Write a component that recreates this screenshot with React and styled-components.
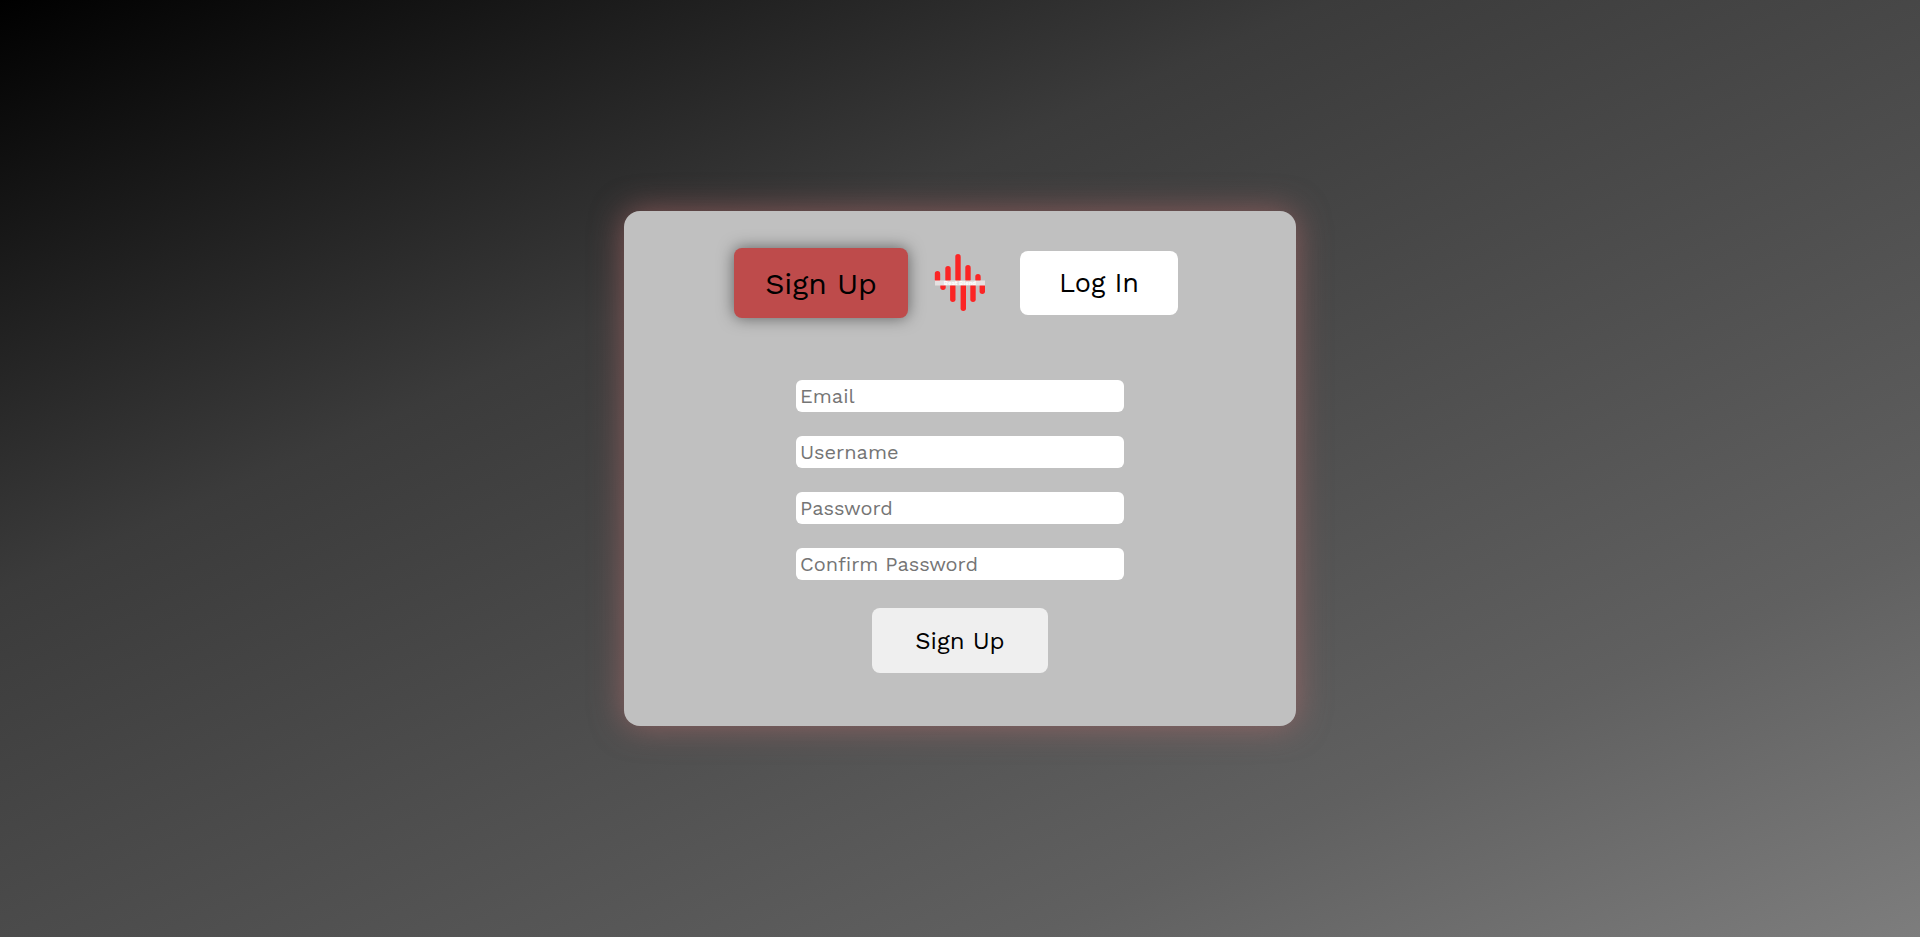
import React from "react";
import styled, { createGlobalStyle } from "styled-components";

const GlobalStyle = createGlobalStyle`
  * { box-sizing: border-box; }
  body { margin: 0; font-family: "Work Sans", Inter, sans-serif; font-weight: 400; color: #000; }
  button, input { font-family: inherit; font-weight: inherit; color: inherit; }
`;

const Page = styled.main`
  min-height: 100vh;
  display: flex;
  align-items: center;
  justify-content: center;
  background: linear-gradient(156deg, #000 0%, #3b3b3b 33%, #606060 78%, #7d7d7d 100%);
`;

const Card = styled.section`
  width: 35%;
  min-width: 560px;
  padding: 32px 0 53px;
  display: flex;
  flex-direction: column;
  align-items: center;
  background: #c0c0c0;
  border-radius: 16px;
  box-shadow: 0 0 32px rgba(188, 110, 110, 0.6);
`;

const Tabs = styled.nav`
  display: flex;
  align-items: center;
`;

const Tab = styled.button`
  width: ${(p) => (p.$active ? "174px" : "158px")};
  height: ${(p) => (p.$active ? "70px" : "64px")};
  margin: ${(p) => (p.$active ? "0 -8px" : "0")};
  padding: 0;
  border: 0;
  border-radius: 8px;
  font-size: ${(p) => (p.$active ? "30px" : "27px")};
  background: ${(p) => (p.$active ? "#be4b4b" : "#fff")};
  box-shadow: ${(p) => (p.$active ? "0 0 16px rgba(0, 0, 0, 0.5)" : "none")};
`;

const Logo = styled.svg`
  width: 80px;
  height: 80px;
  margin: 0 20px;
`;

const Form = styled.form`
  width: 328px;
  margin-top: 57px;
  display: flex;
  flex-direction: column;
  align-items: center;
  gap: 24px;
`;

const Field = styled.input`
  width: 100%;
  height: 32px;
  padding: 0 4px;
  border: 0;
  border-radius: 6px;
  background: #fff;
  font-size: 20px;
  &::placeholder { color: #757575; opacity: 1; }
`;

const Submit = styled.button`
  width: 176px;
  height: 65px;
  margin-top: 4px;
  padding: 0;
  border: 0;
  border-radius: 8px;
  background: #efefef;
  font-size: 24px;
`;

const bars = [
  [17.5, 31, 42], [28, 26, 42], [38, 14, 42], [48, 25, 42], [58, 34, 42],
  [23, 43, 50], [32.8, 43, 62], [43.3, 43, 71], [53, 43, 62], [62.3, 43, 54],
];

const fields = [
  ["Email", "email"],
  ["Username", "text"],
  ["Password", "password"],
  ["Confirm Password", "password"],
];

export default function App() {
  return (
    <>
      <GlobalStyle />
      <Page>
        <Card>
          <Tabs>
            <Tab type="button" $active>Sign Up</Tab>
            <Logo viewBox="0 3 80 80" role="img" aria-label="Beat Blend">
              {bars.map(([x, top, bottom]) => (
                <rect key={x} x={x - 2.7} y={top} width="5.4" height={bottom - top} rx="2.7" fill="#fb2525" />
              ))}
              <rect x="15" y="40.5" width="50" height="5" fill="#e6e0e0" />
              <text x="40" y="45" textAnchor="middle" fontSize="6" fontWeight="700" fill="#fff">Beat Blend</text>
            </Logo>
            <Tab type="button">Log In</Tab>
          </Tabs>
          <Form>
            {fields.map(([label, type]) => (
              <Field key={label} type={type} placeholder={label} aria-label={label} />
            ))}
            <Submit type="submit">Sign Up</Submit>
          </Form>
        </Card>
      </Page>
    </>
  );
}
